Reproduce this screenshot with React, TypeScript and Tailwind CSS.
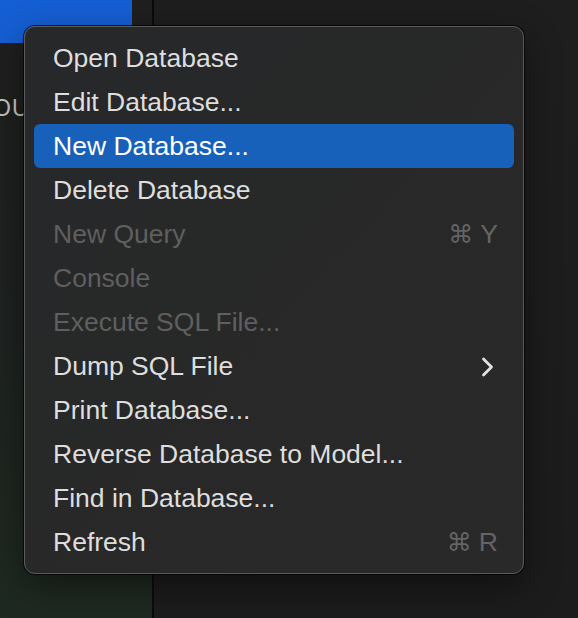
type Item = {
  label: string;
  disabled?: boolean;
  active?: boolean;
  shortcut?: string;
  submenu?: boolean;
};

const items: Item[] = [
  { label: "Open Database" },
  { label: "Edit Database..." },
  { label: "New Database...", active: true },
  { label: "Delete Database" },
  { label: "New Query", disabled: true, shortcut: "Y" },
  { label: "Console", disabled: true },
  { label: "Execute SQL File...", disabled: true },
  { label: "Dump SQL File", submenu: true },
  { label: "Print Database..." },
  { label: "Reverse Database to Model..." },
  { label: "Find in Database..." },
  { label: "Refresh", shortcut: "R" },
];

function MenuRow({ item }: { item: Item }) {
  const color = item.active ? "text-white" : item.disabled ? "text-[#5f5f5f]" : "text-[#dedede]";
  return (
    <div
      className={`flex h-[44px] items-center rounded-[6px] pl-[19px] pr-[16px] pt-[2px] ${item.active ? "bg-[#1861ba]" : ""} ${color}`}
    >
      <span className="flex-1 whitespace-nowrap">{item.label}</span>
      {item.shortcut && (
        <span className="flex items-center gap-[7px] text-[#646464]">
          <span className="text-[25px]" style={{ fontFamily: "'DejaVu Sans', sans-serif" }}>⌘</span>
          <span>{item.shortcut}</span>
        </span>
      )}
      {item.submenu && (
        <svg width="13" height="20" viewBox="0 0 13 20" className="mr-[4px] text-[#e2e2e2]">
          <polyline points="2.5,2 10.5,10 2.5,18" fill="none" stroke="currentColor" strokeWidth="2.8" strokeLinecap="round" strokeLinejoin="round" />
        </svg>
      )}
    </div>
  );
}

export default function App() {
  return (
    <div
      className="relative flex h-[618px] w-[578px] overflow-hidden bg-[#1f1f1f]"
      style={{ fontFamily: "'Liberation Sans', Arial, sans-serif" }}
    >
      <div className="flex w-[152px] flex-col bg-gradient-to-b from-[#1e1f1e] via-[#1e2220] to-[#1e2a21]">
        <div className="h-[43px] w-[132px] rounded-br-[10px] bg-[#155fd4]" />
        <div className="ml-[-7px] mt-[48px] text-[23px] tracking-[1px] text-[#c8c8c8]">OUS</div>
      </div>
      <div className="w-[2px] bg-[#0b0b0b]" />
      <div className="flex-1 bg-gradient-to-b from-[#1e1e1e] to-[#1c1c1c]" />

      <div className="absolute left-[24px] top-[26px] w-[500px] rounded-[11px] border border-[#5a5a5a] bg-gradient-to-br from-[#26282a] via-[#282828] to-[#292929] p-[9px] text-[26.5px] shadow-[0_0_0_1px_rgba(0,0,0,0.7),0_12px_36px_rgba(0,0,0,0.45)]">
        {items.map((item) => (
          <MenuRow key={item.label} item={item} />
        ))}
      </div>
    </div>
  );
}
